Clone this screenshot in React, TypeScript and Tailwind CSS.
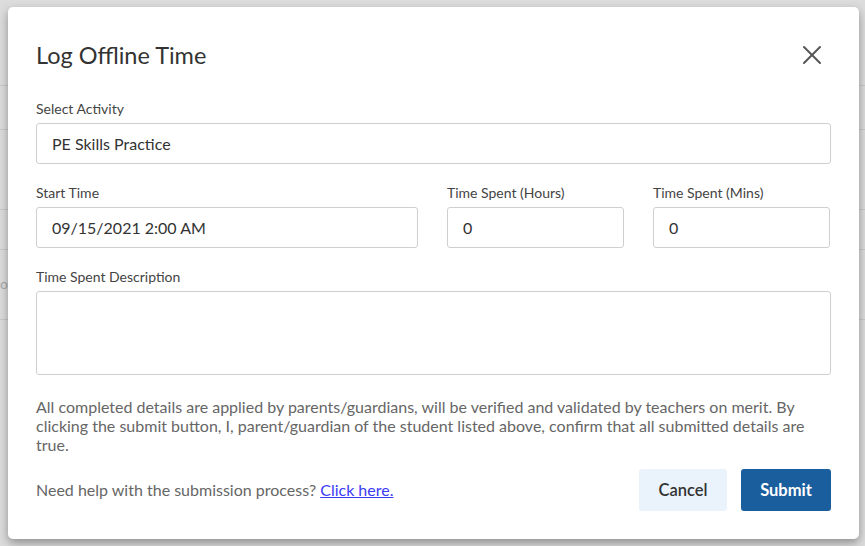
import { X } from 'lucide-react';

const Field = ({ label, value, className = '' }: { label: string; value: string; className?: string }) => (
    <div className={className}>
        <label className="block text-[14px] leading-4 text-[#444]">{label}</label>
        <div className="mt-[6px] h-[41px] flex items-center px-[15px] border border-[#cfcfcf] rounded-[3px] text-[16px] text-[#333] bg-white">
            {value}
        </div>
    </div>
);

const LogOfflineTimeModal = () => {
    return (
        <div className="relative w-[865px] h-[546px] overflow-hidden bg-[#dcdcdc] font-['Lato','Noto_Sans',sans-serif]">
            {/* page behind the overlay */}
            <div className="absolute inset-0 flex flex-col">
                <div className="h-[86px] border-b border-[#c9c9c9]"></div>
                <div className="h-[44px] border-b border-[#c9c9c9]"></div>
                <div className="h-[80px] border-b border-[#c9c9c9]"></div>
                <div className="h-[40px] border-b border-[#c9c9c9]"></div>
                <div className="h-[70px] border-b border-[#c9c9c9] text-[#aaa] text-sm pt-[24px]">ot</div>
            </div>

            <div className="absolute left-[8px] top-[7px] w-[851px] h-[532px] bg-white rounded-[5px] shadow-[0_4px_10px_rgba(0,0,0,0.35)] px-[28px] pt-[34px]">
                <div className="h-[28px] flex items-center justify-between">
                    <h2 className="text-[23.5px] leading-7 text-[#333]">Log Offline Time</h2>
                    <button className="mr-[3px] -my-[4px] text-[#555]">
                        <X size={32} strokeWidth={1.5} />
                    </button>
                </div>

                <Field label="Select Activity" value="PE Skills Practice" className="mt-[32px]" />

                <div className="mt-[21px] grid grid-cols-[382px_177px_177px] gap-x-[29px]">
                    <Field label="Start Time" value="09/15/2021 2:00 AM" />
                    <Field label="Time Spent (Hours)" value="0" />
                    <Field label="Time Spent (Mins)" value="0" />
                </div>

                <div className="mt-[21px]">
                    <label className="block text-[14px] leading-4 text-[#444]">Time Spent Description</label>
                    <div className="mt-[6px] h-[84px] border border-[#cfcfcf] rounded-[3px]"></div>
                </div>

                <p className="mt-[22px] text-[16px] leading-[19px] text-[#666]">
                    All completed details are applied by parents/guardians, will be verified and validated by teachers on merit. By
                    clicking the submit button, I, parent/guardian of the student listed above, confirm that all submitted details are
                    true.
                </p>

                <div className="mt-[15px] flex items-center justify-between">
                    <p className="text-[16px] text-[#666]">
                        Need help with the submission process?{' '}
                        <a href="#" className="text-[#3b3bf5] underline">Click here.</a>
                    </p>
                    <div className="flex gap-[14px]">
                        <button className="w-[88px] h-[42px] rounded-[3px] bg-[#eaf2fb] text-[16.5px] font-semibold text-[#333]">
                            Cancel
                        </button>
                        <button className="w-[90px] h-[42px] rounded-[3px] bg-[#1a5e9e] text-[16.5px] font-bold text-white">
                            Submit
                        </button>
                    </div>
                </div>
            </div>
        </div>
    );
};

export default LogOfflineTimeModal;
